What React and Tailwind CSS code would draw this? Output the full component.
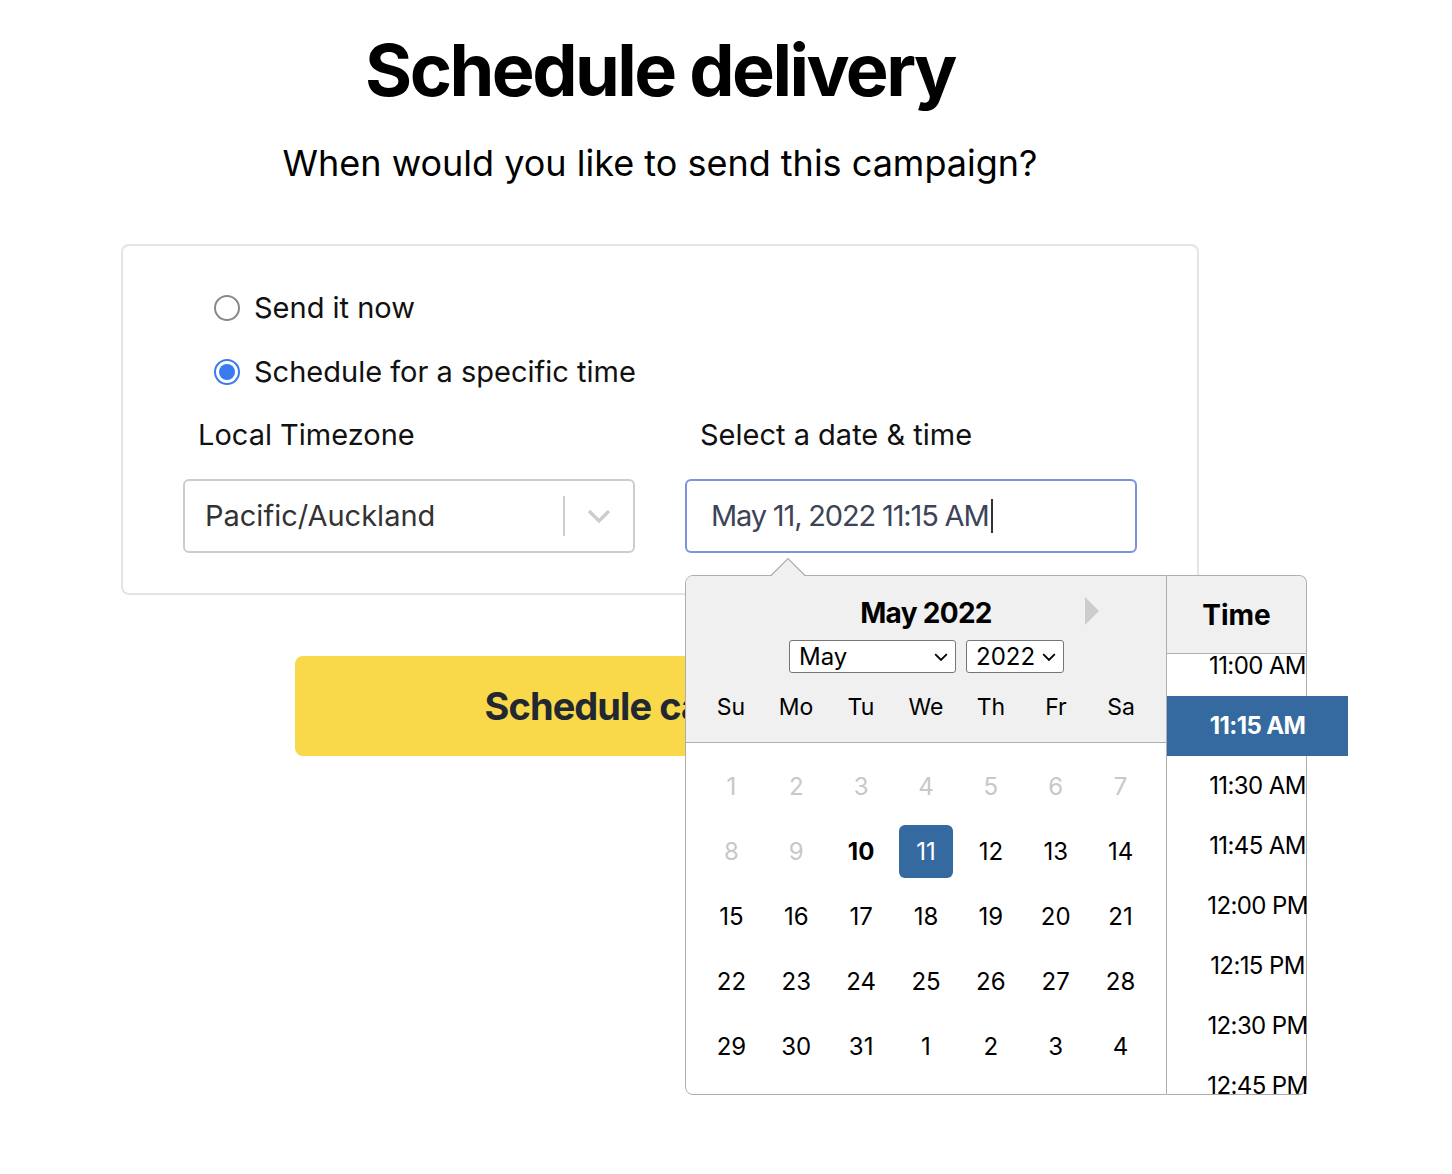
import React from 'react';

const font = { fontFamily: 'Inter, "Liberation Sans", sans-serif' };

const dayNames = ['Su', 'Mo', 'Tu', 'We', 'Th', 'Fr', 'Sa'];

const weeks = [
    [1, 2, 3, 4, 5, 6, 7].map((d) => ({ d, off: true })),
    [
        { d: 8, off: true },
        { d: 9, off: true },
        { d: 10, today: true },
        { d: 11, selected: true },
        { d: 12 },
        { d: 13 },
        { d: 14 },
    ],
    [15, 16, 17, 18, 19, 20, 21].map((d) => ({ d })),
    [22, 23, 24, 25, 26, 27, 28].map((d) => ({ d })),
    [29, 30, 31, 1, 2, 3, 4].map((d) => ({ d })),
];

const times = ['11:00 AM', '11:15 AM', '11:30 AM', '11:45 AM', '12:00 PM', '12:15 PM', '12:30 PM', '12:45 PM'];

function Chevron({ className }) {
    return (
        <svg viewBox="0 0 12 8" className={className} fill="none" stroke="currentColor" strokeWidth="1.6">
            <path d="M1 1.5l5 5 5-5" />
        </svg>
    );
}

function Radio({ checked, label }) {
    return (
        <label className="flex items-center gap-[14px]">
            {checked ? (
                <span className="w-[26px] h-[26px] rounded-full border-2 border-[#3a7bf0] flex items-center justify-center">
                    <span className="w-[16px] h-[16px] rounded-full bg-[#3a7bf0]"></span>
                </span>
            ) : (
                <span className="w-[26px] h-[26px] rounded-full border-2 border-[#8a8a8a] bg-white"></span>
            )}
            <span className="text-[29px] leading-[36px] text-[#111]">{label}</span>
        </label>
    );
}

function DatePopover() {
    return (
        <div className="absolute left-0 top-[96px] flex">
            {/* pointer */}
            <svg className="absolute left-[84px] top-[-18px]" width="40" height="20" viewBox="0 0 40 20">
                <path d="M1 19.5L19 1.5L37 19.5" fill="#f0f0f0" stroke="#aeaeae" strokeWidth="1.2" />
            </svg>

            {/* month */}
            <div className="w-[482px] h-[520px] bg-white border border-[#aeaeae] rounded-l-[8px] overflow-hidden flex flex-col">
                <div className="bg-[#f0f0f0] border-b border-[#aeaeae] h-[167px] flex flex-col items-center pt-[20px] relative">
                    <div className="text-[28px] font-bold text-black leading-[34px] tracking-tight">May 2022</div>
                    <svg className="absolute left-[398px] top-[21px]" width="16" height="28" viewBox="0 0 16 28">
                        <path d="M1 0L15 14L1 28Z" fill="#cccccc" />
                    </svg>
                    <div className="flex gap-[10px] mt-[10px] ml-[1px]">
                        <div className="w-[167px] h-[33px] bg-white border border-[#767676] rounded-[3px] flex items-center justify-between pl-[9px] pr-[7px] text-[24px] leading-none text-black">
                            May
                            <Chevron className="w-[14px] h-[10px] text-black" />
                        </div>
                        <div className="w-[98px] h-[33px] bg-white border border-[#767676] rounded-[3px] flex items-center justify-between pl-[9px] pr-[7px] text-[24px] leading-none text-black">
                            2022
                            <Chevron className="w-[14px] h-[10px] text-black" />
                        </div>
                    </div>
                    <div className="grid grid-cols-7 w-[455px] mt-[18px]">
                        {dayNames.map((n) => (
                            <div key={n} className="flex justify-center">
                                <span className="text-[23px] leading-[32px] text-black">{n}</span>
                            </div>
                        ))}
                    </div>
                </div>
                <div className="px-[13px] pt-[11px] pb-[15px] flex flex-col">
                    {weeks.map((week, i) => (
                        <div key={i} className="grid grid-cols-7 h-[65px]">
                            {week.map((day, j) => (
                                <div key={j} className="flex items-center justify-center">
                                    <span
                                        className={
                                            day.selected
                                                ? 'w-[54px] h-[53px] rounded-[6px] bg-[#356aa0] text-white flex items-center justify-center text-[24px]'
                                                : day.off
                                                ? 'text-[24px] text-[#c8c8c8]'
                                                : day.today
                                                ? 'text-[24px] font-bold text-black'
                                                : 'text-[24px] text-black'
                                        }
                                    >
                                        {day.d}
                                    </span>
                                </div>
                            ))}
                        </div>
                    ))}
                </div>
            </div>

            {/* time */}
            <div className="w-[140px] h-[520px] flex flex-col border border-l-0 border-[#aeaeae] rounded-r-[8px] bg-white">
                <div className="h-[78px] bg-[#f0f0f0] border-b border-[#aeaeae] rounded-tr-[8px] flex items-center justify-center text-[28px] font-bold text-black shrink-0">
                    Time
                </div>
                <div className="flex-1 min-h-0 [clip-path:inset(0_-60px_0_0)]">
                    <div className="w-[181px] -mt-[18px]">
                        {times.map((t) => (
                            <div
                                key={t}
                                className={
                                    t === '11:15 AM'
                                        ? 'h-[60px] flex items-center justify-center bg-[#356aa0] text-white font-bold text-[24px] tracking-tight'
                                        : 'h-[60px] flex items-center justify-center text-black text-[24px] tracking-tight'
                                }
                            >
                                {t}
                            </div>
                        ))}
                    </div>
                </div>
            </div>
        </div>
    );
}

export default function App() {
    return (
        <div className="min-h-[1174px] bg-white" style={font}>
            <div className="w-[1078px] ml-[121px] pt-[28px] flex flex-col items-center">
                <h1 className="text-[72px] font-bold leading-[84px] tracking-[-0.035em] text-black">Schedule delivery</h1>
                <p className="text-[36px] leading-[44px] text-black mt-[29px]">When would you like to send this campaign?</p>

                {/* options card */}
                <div className="w-full mt-[59px] border-2 border-[#e3e3e8] rounded-[8px] pt-[44px] pb-[40px] px-[60px]">
                    <div className="flex flex-col gap-[28px] pl-[31px]">
                        <Radio label="Send it now" />
                        <Radio checked label="Schedule for a specific time" />
                    </div>
                    <div className="grid grid-cols-2 gap-[50px] mt-[25px]">
                        <div className="flex flex-col">
                            <span className="text-[29px] text-[#111] pl-[15px] leading-[40px]">Local Timezone</span>
                            <div className="mt-[24px] h-[74px] border-2 border-[#cccccc] rounded-[6px] flex items-center pl-[20px] pr-[22px]">
                                <span className="flex-1 text-[29px] text-[#333]">Pacific/Auckland</span>
                                <span className="w-[2px] h-[40px] bg-[#cccccc] mr-[22px]"></span>
                                <Chevron className="w-[24px] h-[16px] text-[#cccccc]" />
                            </div>
                        </div>
                        <div className="flex flex-col relative">
                            <span className="text-[29px] text-[#111] pl-[15px] leading-[40px]">Select a date &amp; time</span>
                            <div className="relative mt-[24px] z-10">
                                <div className="h-[74px] border-2 border-[#7b93d8] rounded-[6px] flex items-center pl-[24px] bg-white">
                                    <span className="text-[29px] tracking-[-0.04em] text-[#3d4458]">May 11, 2022 11:15 AM</span>
                                    <span className="w-[2px] h-[34px] bg-[#333] ml-[2px]"></span>
                                </div>
                                <DatePopover />
                            </div>
                        </div>
                    </div>
                </div>

                <button className="mt-[61px] w-[730px] h-[100px] rounded-[8px] bg-[#f9d949] text-[38px] font-bold text-[#222831] tracking-tight">
                    Schedule campaign
                </button>
            </div>
        </div>
    );
}
